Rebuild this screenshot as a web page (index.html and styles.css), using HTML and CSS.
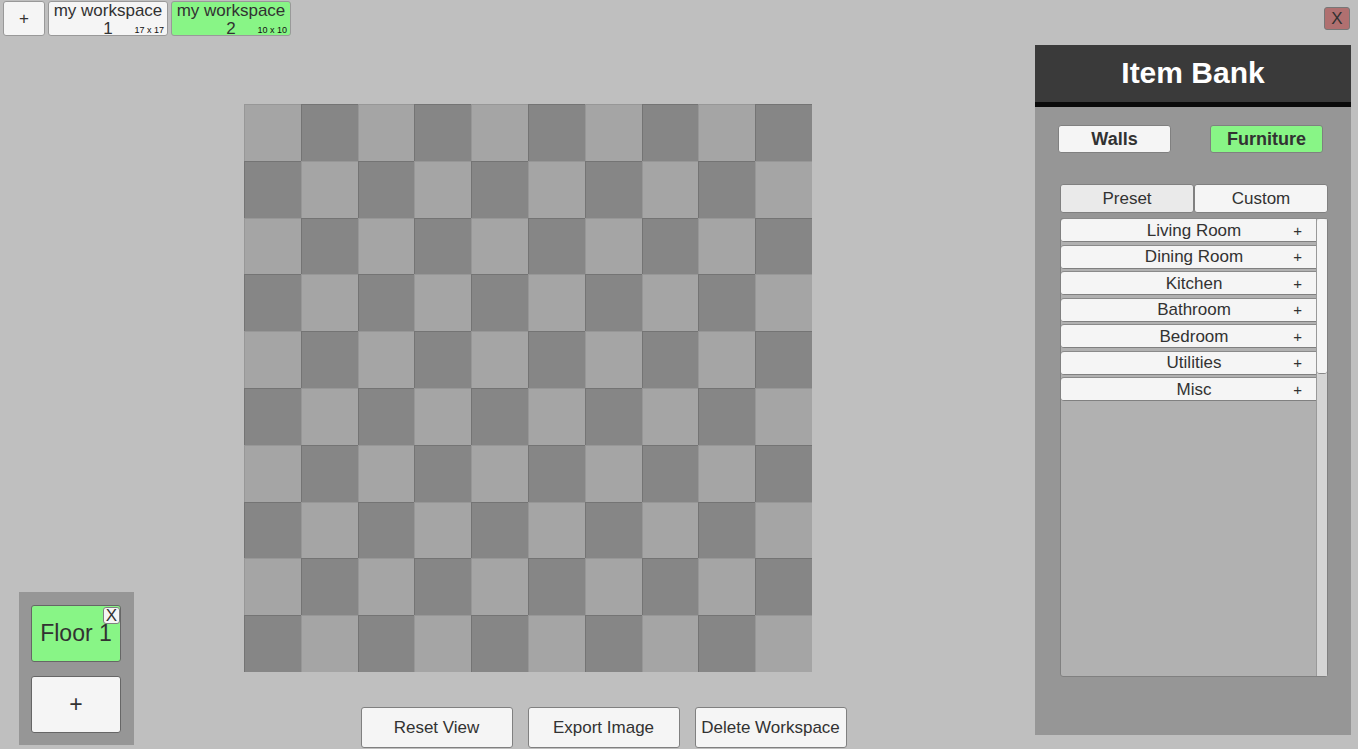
FILE: index.html
```html
<!DOCTYPE html>
<html lang="en">
<head>
<meta charset="utf-8">
<title>Workspace planner</title>
<link rel="stylesheet" href="styles.css">
</head>
<body>
<div class="app">
  <header class="topbar">
    <button class="btn add-workspace" aria-label="Add workspace">+</button>
    <button class="btn workspace">my workspace 1<span class="size">17 x 17</span></button>
    <button class="btn workspace active">my workspace 2<span class="size">10 x 10</span></button>
    <button class="btn close" aria-label="Close">X</button>
  </header>
  <main class="main">
    <aside class="floors">
      <div class="floor">
        <button class="btn active floor-btn">Floor 1</button>
        <button class="btn floor-remove" aria-label="Remove Floor 1">X</button>
      </div>
      <button class="btn floor-btn" aria-label="Add floor">+</button>
    </aside>
    <section class="stage">
      <div class="board-area"><div class="board" id="board"></div></div>
      <div class="actions">
        <button class="btn">Reset View</button>
        <button class="btn">Export Image</button>
        <button class="btn">Delete Workspace</button>
      </div>
    </section>
    <aside class="bank">
      <h1 class="bank-title">Item Bank</h1>
      <div class="kinds">
        <button class="btn">Walls</button>
        <button class="btn active">Furniture</button>
      </div>
      <div class="sources">
        <button class="btn selected">Preset</button>
        <button class="btn">Custom</button>
      </div>
      <div class="list">
        <div class="rows">
          <button class="btn row">Living Room<span class="plus">+</span></button>
          <button class="btn row">Dining Room<span class="plus">+</span></button>
          <button class="btn row">Kitchen<span class="plus">+</span></button>
          <button class="btn row">Bathroom<span class="plus">+</span></button>
          <button class="btn row">Bedroom<span class="plus">+</span></button>
          <button class="btn row">Utilities<span class="plus">+</span></button>
          <button class="btn row">Misc<span class="plus">+</span></button>
        </div>
        <div class="scrollbar"><div class="thumb"></div></div>
      </div>
    </aside>
  </main>
</div>
<script src="board.js"></script>
</body>
</html>
```
FILE: styles.css
```css
* {
  box-sizing: border-box;
}

body {
  margin: 0;
  background: #bfbfbf;
  color: #323232;
  font-family: "Liberation Sans", Arial, sans-serif;
  font-size: 17px;
  line-height: 19px;
}

.app {
  display: flex;
  flex-direction: column;
  min-height: 100vh;
}

.btn {
  padding: 0;
  border: 1px solid #808080;
  border-radius: 3px;
  background: #f5f5f5;
  color: inherit;
  font: inherit;
}

.btn.active {
  background: #88f586;
}

.btn.selected {
  background: #eaeaea;
}

.topbar {
  display: flex;
  gap: 3px;
  padding: 1px 8px 0 3px;
}

.topbar .btn {
  height: 35px;
  border-color: #999;
}

.topbar .add-workspace {
  width: 42px;
}

.topbar .workspace {
  position: relative;
  width: 120px;
  padding-bottom: 2px;
  line-height: 18px;
}

.size {
  position: absolute;
  right: 3px;
  bottom: 0;
  font-size: 9px;
  line-height: 10px;
  color: #111;
}

.topbar .close {
  width: 26px;
  height: 23px;
  margin: 6px 0 0 auto;
  border-color: #777;
  background: #b07070;
}

.main {
  flex: 1;
  display: grid;
  grid-template-columns: 115px 1fr 316px;
  padding: 0 7px 0 19px;
}

.floors {
  align-self: end;
  display: flex;
  flex-direction: column;
  gap: 14px;
  margin-bottom: 4px;
  padding: 13px 13px 12px 12px;
  background: #969696;
}

.floor {
  position: relative;
  display: flex;
}

.floor-btn {
  flex: 1;
  min-height: 57px;
  border-color: #666;
  font-size: 23px;
  line-height: 55px;
}

.floor-remove {
  position: absolute;
  top: 2px;
  right: 1px;
  width: 17px;
  height: 17px;
  line-height: 15px;
}

.stage {
  display: flex;
  flex-direction: column;
  justify-content: space-between;
  padding: 68px 0 1px;
}

.board-area {
  display: flex;
  justify-content: center;
  padding-right: 113px;
}

.board {
  display: grid;
  grid-template-columns: repeat(10, 1fr);
  width: calc(100vh - 181px);
  aspect-ratio: 1;
}

.cell {
  border: 1px solid #979797;
  border-width: 1px 0 0 1px;
  background: #a5a5a5;
}

.cell.dark {
  border-color: #747474;
  background: #868686;
}

.actions {
  display: flex;
  justify-content: center;
  gap: 15px;
  padding-left: 38px;
}

.actions .btn {
  width: 152px;
  height: 41px;
}

.bank {
  display: flex;
  flex-direction: column;
  margin: 9px 0 14px;
  background: #969696;
}

.bank-title {
  margin: 0;
  padding: 10px 0 11px;
  border-bottom: 5px solid #0a0a0a;
  background: #3a3a3a;
  color: #fff;
  font-size: 30px;
  line-height: 36px;
  text-align: center;
}

.kinds {
  display: flex;
  justify-content: space-between;
  padding: 18px 28px 0 23px;
}

.kinds .btn {
  width: 113px;
  height: 28px;
  font-size: 18px;
  font-weight: bold;
}

.sources {
  display: flex;
  margin: 31px 23px 5px 25px;
}

.sources .btn {
  flex: 1;
  height: 29px;
}

.list {
  position: relative;
  flex: 1;
  margin: 0 23px 58px 25px;
  border: 1px solid #808080;
  border-radius: 3px;
  background: #b1b1b1;
}

.rows {
  display: flex;
  flex-direction: column;
  justify-content: space-between;
  height: 182px;
}

.row {
  position: relative;
  height: 23px;
  border-width: 0 0 1px;
  line-height: 21px;
  box-shadow: 0 -1px 0 #8a8a8a;
}

.plus {
  position: absolute;
  right: 25px;
  font-size: 15px;
}

.scrollbar {
  position: absolute;
  top: 0;
  right: 0;
  bottom: 0;
  width: 11px;
  border-left: 1px solid #999;
  background: #d5d5d5;
}

.thumb {
  height: 34%;
  border-bottom: 1px solid #888;
  border-radius: 3px;
  background: #f5f5f5;
}
```
FILE: board.js
```js
const board = document.getElementById("board");
const size = 10;
for (let y = 0; y < size; y++) {
  for (let x = 0; x < size; x++) {
    const cell = document.createElement("div");
    cell.className = (x + y) % 2 ? "cell dark" : "cell";
    board.appendChild(cell);
  }
}
```
